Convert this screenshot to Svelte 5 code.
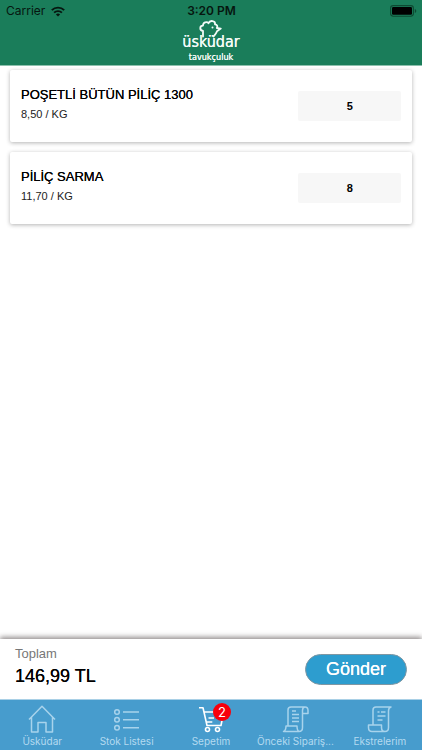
<script>
  let items = $state([
    { id: 'a', name: 'POŞETLİ BÜTÜN PİLİÇ 1300', price: '8,50 / KG', qty: '5' },
    { id: 'b', name: 'PİLİÇ SARMA', price: '11,70 / KG', qty: '8' }
  ]);
  const tabs = [
    { icon: 'home', label: 'Üsküdar' },
    { icon: 'list', label: 'Stok Listesi' },
    { icon: 'cart', label: 'Sepetim', badge: 2 },
    { icon: 'orders', label: 'Önceki Sipariş...' },
    { icon: 'receipt', label: 'Ekstrelerim' }
  ];
</script>

<div class="app">
  <header>
    <div class="status">
      <span class="carrier">Carrier
        <svg width="14" height="11" viewBox="0 0 14 11" aria-hidden="true">
          <g fill="none" stroke="#06160f" stroke-width="1.9">
            <path d="M.8 4.2a8.8 8.8 0 0 1 12.4 0" />
            <path d="M3.1 6.7a5.5 5.5 0 0 1 7.8 0" />
          </g>
          <path d="M7 10.6 4.9 8.5a3 3 0 0 1 4.2 0z" fill="#06160f" />
        </svg>
      </span>
      <span class="time">3:20 PM</span>
      <svg class="battery" width="27" height="12" viewBox="0 0 27 12" aria-hidden="true">
        <rect x=".6" y=".6" width="22.8" height="10.6" rx="2.6" fill="none" stroke="#0d4a32" stroke-width="1.1" />
        <rect x="2" y="2" width="20" height="7.8" rx="1.2" fill="#000" />
        <path d="M24.8 4v4q1.5-.6 1.5-2t-1.5-2z" fill="#0d4a32" />
      </svg>
    </div>
    <div class="logo">
      <svg width="24" height="18" viewBox="0 0 24 18" aria-hidden="true">
        <path d="M4 16.5V11C.3 10.300.5 5.600 4 5.600 4 2.200 8 1.300 9.500 3.200 11-.2 16.500.6 16 4.300c2.200.2 2.800 2.200 1.800 3.700l4 .6-3.800 2.600c-.4 2.600-2.500 3.300-3.500 5.300" fill="none" stroke="#f4fbf8" stroke-width="1.800" stroke-linecap="round" stroke-linejoin="round" />
        <circle cx="13.500" cy="7.500" r="1" fill="#f4fbf8" />
      </svg>
      <span class="brand">üsküdar</span>
      <span class="sub">tavukçuluk</span>
    </div>
  </header>

  <main>
    {#each items as item (item.id)}
      <article>
        <label for={'qty-' + item.id}>
          <span class="name">{item.name}</span>
          <span class="price">{item.price}</span>
        </label>
        <input id={'qty-' + item.id} type="text" inputmode="numeric" bind:value={item.qty} />
      </article>
    {/each}
  </main>

  <section class="total">
    <div class="sum">
      <div class="caption">Toplam</div>
      <div class="amount">146,99 TL</div>
    </div>
    <button type="button">Gönder</button>
  </section>

  <nav>
    {#each tabs as tab}
      <a href={'#' + tab.icon} class:active={tab.icon === 'cart'}>
        <span class="icon">
          <svg width="30" height="30" viewBox="0 0 30 30" fill="none" stroke="currentColor" stroke-width="1.5" stroke-linejoin="round" aria-hidden="true">
            {#if tab.icon === 'home'}
              <path d="M2 15.500 15 2.300 28 15.500M4.500 13v15h6.500v-9.500h8V28h6.500V13" />
            {:else if tab.icon === 'list'}
              <circle cx="5" cy="8" r="2.300" /><circle cx="5" cy="15.800" r="2.300" /><circle cx="5" cy="23.700" r="2.300" />
              <path d="M11 8h16M11 15.800h16M11 23.700h16" />
            {:else if tab.icon === 'cart'}
              <g stroke-width="1.600">
                <path d="M3 3.800h4l4 17.700h14l2-10M8 8h15M12.500 14h5.500M10.300 18h6" />
                <circle cx="11.500" cy="25.500" r="2" /><circle cx="21.500" cy="25.500" r="2" />
              </g>
            {:else if tab.icon === 'orders'}
              <path d="M8 21.500V6q0-3 3-3h14q-2.500 0-2.500 3.500v17q0 4-3.500 4M25 3q3 0 3 3.500v3h-5.500M3.500 27.500H19q-2-1-2-5.500H6q0 4.500-2.500 5.500z" />
              <path d="M12 7h4M12 10.500h7M12 14h7M12 17.500h7" />
            {:else}
              <path d="M8 20.500V6q0-3 3-3h15q-2.500.5-2.500 4v16.500q0 4-3.500 4H7q-3.500 0-3.500-4V21h13v2.500q0 4 3.500 4" />
              <path d="M12.500 8h2M16 8h4.500M12.500 12h8M12.500 16h5" />
            {/if}
          </svg>
          {#if tab.badge}<span class="badge">{tab.badge}</span>{/if}
        </span>
        <span class="label">{tab.label}</span>
      </a>
    {/each}
  </nav>
</div>

<style>
  :global(body) { margin: 0; }
  .app {
    min-height: 100vh;
    display: flex;
    flex-direction: column;
    background: #fff;
    color: #000;
    font-family: "Liberation Sans", Arial, sans-serif;
  }
  header { background: #1a7d5a; height: 65px; border-bottom: 1px solid #8cc0ad; }
  .status {
    display: grid;
    grid-template-columns: 1fr auto 1fr;
    align-items: center;
    height: 22px;
    padding: 0 5px 0 6px;
    font: 12px/22px Inter, sans-serif;
    color: #06160f;
  }
  .carrier { display: flex; align-items: center; gap: 6px; }
  .time { font-weight: 600; }
  .battery { justify-self: end; }
  .logo {
    display: flex;
    flex-direction: column;
    align-items: center;
    color: #f4fbf8;
    font-family: "DejaVu Sans Condensed", "DejaVu Sans", sans-serif;
    text-shadow: 0 0 0 #f4fbf8;
  }
  .logo svg { margin: -2px 0 -6px; }
  .brand { font-size: 16px; line-height: 19px; }
  .sub { font-size: 9px; line-height: 12px; }
  main {
    flex: 1;
    display: flex;
    flex-direction: column;
    gap: 10px;
    padding: 4px 10px;
  }
  article {
    display: flex;
    align-items: center;
    justify-content: space-between;
    box-sizing: border-box;
    height: 72px;
    padding: 0 11px;
    border-radius: 2px;
    background: #fff;
    box-shadow: 0 1px 4px rgba(0, 0, 0, 0.3);
  }
  .name { display: block; font-size: 13px; line-height: 20px; text-shadow: 0 0 0 #000; }
  .price { display: block; font-size: 11px; line-height: 18px; color: #222; }
  label { padding-bottom: 4px; }
  input {
    width: 27%;
    height: 30px;
    box-sizing: border-box;
    border: 0;
    border-radius: 2px;
    background: #f7f7f7;
    text-align: center;
    font: 700 11px "Liberation Sans", Arial, sans-serif;
    color: #000;
  }
  .total {
    display: flex;
    align-items: center;
    justify-content: space-between;
    box-sizing: border-box;
    height: 60px;
    padding: 0 15px;
    background: #fff;
    box-shadow: 0 -2px 5px rgba(40, 30, 30, 0.5);
  }
  .sum { padding-bottom: 4px; }
  .caption { font-size: 13px; line-height: 18px; color: #777; }
  .amount { font-size: 18px; line-height: 26px; text-shadow: 0 0 0 #000; }
  button {
    width: 102px;
    height: 31px;
    border: 1px solid #7f97a3;
    border-radius: 16px;
    background: #2d9dcf;
    color: #fff;
    font: 18px "Liberation Sans", Arial, sans-serif;
    text-shadow: 0 0 0 #fff;
  }
  nav {
    display: flex;
    box-sizing: border-box;
    height: 51px;
    border-top: 1px solid #a9d0e6;
    background: #479ccd;
    position: relative;
  }
  a {
    flex: 1 1 0;
    min-width: 0;
    display: flex;
    flex-direction: column;
    align-items: center;
    padding-top: 4px;
    color: #a8d3ec;
    text-decoration: none;
  }
  a.active { color: #fff; }
  .icon { position: relative; height: 30px; }
  .badge {
    position: absolute;
    top: -1px;
    left: 17px;
    width: 18px;
    height: 18px;
    border-radius: 50%;
    background: #f8000c;
    color: #fff;
    text-align: center;
    font: 13px/18px Inter, sans-serif;
  }
  .label { font: 10px/14px Inter, sans-serif; color: #b4daf0; white-space: nowrap; }
</style>
